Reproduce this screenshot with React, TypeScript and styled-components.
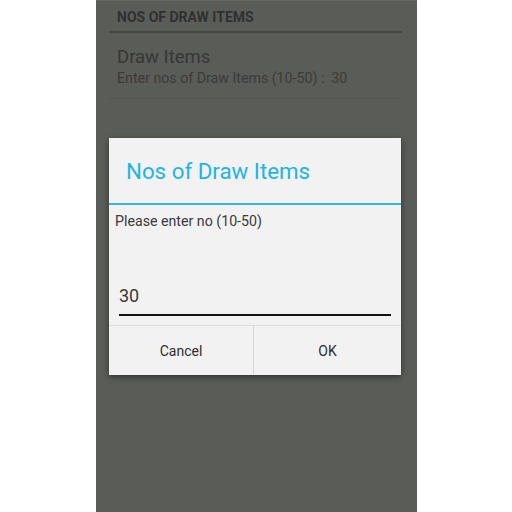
import React from "react";
import styled, { createGlobalStyle } from "styled-components";

const Global = createGlobalStyle`
  html, body { margin: 0; padding: 0; background: #ffffff; }
  body { font-family: Roboto, "Noto Sans", "Liberation Sans", sans-serif; }
`;

const Screen = styled.div`
  position: relative;
  margin-left: 96px;
  width: 321px;
  height: 512px;
  background: #5a5c58;
  border-top: 1px solid #666864;
  box-sizing: border-box;
  overflow: hidden;
  display: flex;
  flex-direction: column;
  padding: 0 15px 0 13px;
`;

const SectionHeader = styled.div`
  height: 32px;
  display: flex;
  align-items: center;
  padding-left: 8px;
  padding-top: 1px;
  font-size: 14px;
  font-weight: 700;
  color: #30312f;
  border-bottom: 2px solid #454643;
  box-sizing: border-box;
`;

const Pref = styled.div`
  display: flex;
  flex-direction: column;
  padding: 13px 0 0 8px;
  height: 66px;
  box-sizing: border-box;
  border-bottom: 1px solid #535551;
`;

const PrefTitle = styled.div`
  font-size: 18.5px;
  line-height: 22px;
  color: #363735;
`;

const PrefSummary = styled.div`
  font-size: 14.2px;
  line-height: 18px;
  color: #3a3b39;
  margin-top: 1px;
`;

const Dialog = styled.div`
  position: absolute;
  left: 13px;
  top: 137px;
  width: 292px;
  height: 237px;
  background: #f2f2f2;
  box-shadow: 0 2px 6px rgba(0, 0, 0, 0.45);
  display: flex;
  flex-direction: column;
`;

const DialogTitle = styled.div`
  height: 67px;
  flex-shrink: 0;
  box-sizing: border-box;
  border-bottom: 2px solid #33b5e5;
  display: flex;
  align-items: center;
  padding: 0 0 0 17px;
  font-size: 22.3px;
  color: #1fb4e5;
`;

const Message = styled.div`
  padding: 7px 6px 0;
  font-size: 14.2px;
  line-height: 18px;
  color: #3a3a3a;
`;

const Field = styled.div`
  margin: auto 10px 0;
  padding: 0 0 7px 0;
  border-bottom: 2px solid #111111;
  font-size: 18px;
  line-height: 22px;
  color: #3a3a3a;
`;

const ButtonRow = styled.div`
  margin-top: 9px;
  height: 49px;
  flex-shrink: 0;
  border-top: 1px solid #dcdcdc;
  display: grid;
  grid-template-columns: 145px 1fr;
`;

const DialogButton = styled.div<{ $divider?: boolean }>`
  display: flex;
  align-items: center;
  justify-content: center;
  font-size: 14px;
  color: #2e2e2e;
  border-right: ${(p) => (p.$divider ? "1px solid #d6d6d6" : "none")};
`;

export default function App() {
  return (
    <>
      <Global />
      <Screen>
        <SectionHeader>NOS OF DRAW ITEMS</SectionHeader>
        <Pref>
          <PrefTitle>Draw Items</PrefTitle>
          <PrefSummary>Enter nos of Draw Items (10-50) :&nbsp; 30</PrefSummary>
        </Pref>
        <Dialog>
          <DialogTitle>Nos of Draw Items</DialogTitle>
          <Message>Please enter no (10-50)</Message>
          <Field>30</Field>
          <ButtonRow>
            <DialogButton $divider>Cancel</DialogButton>
            <DialogButton>OK</DialogButton>
          </ButtonRow>
        </Dialog>
      </Screen>
    </>
  );
}
